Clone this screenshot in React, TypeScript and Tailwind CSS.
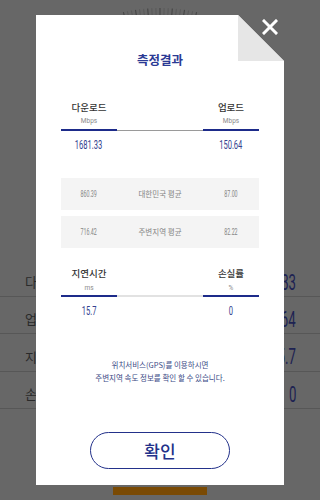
import React from "react";

const KR = { fontFamily: '"Noto Sans CJK KR", "Noto Sans", sans-serif' } as const;
const NUM = { fontFamily: 'Roboto, "Liberation Sans", sans-serif' } as const;

function Num({ children, className = "" }: { children: React.ReactNode; className?: string }) {
  return (
    <span className={"inline-block scale-x-[0.56] " + className} style={NUM}>
      {children}
    </span>
  );
}

function Ticks() {
  const ticks = [];
  const cx = 160;
  const cy = 170;
  const R = 162;
  for (let i = -9; i <= 9; i++) {
    const a = (i * 1.45 * Math.PI) / 180;
    const x1 = cx + R * Math.sin(a);
    const y1 = cy - R * Math.cos(a);
    const x2 = cx + (R - 14) * Math.sin(a);
    const y2 = cy - (R - 14) * Math.cos(a);
    ticks.push(
      <line key={i} x1={x1} y1={y1} x2={x2} y2={y2} stroke={i % 3 === 0 ? "#464646" : "#555555"} strokeWidth={i % 3 === 0 ? 1.1 : 0.8} />
    );
  }
  return (
    <svg width="320" height="30" className="absolute left-0 top-0">
      {ticks}
    </svg>
  );
}

function BgRow({ label, value, h }: { label: string; value: string; h: string }) {
  return (
    <div className={"flex items-center justify-between border-b border-[#575757] pl-[25px] pr-[24px] pt-[8px] " + h}>
      <span className="text-[13px] text-[#2a2a2a]" style={KR}>
        {label}
      </span>
      <span className="origin-right">
        <span className="inline-block origin-right scale-x-[0.6] text-[22px] text-[#1d2252]" style={NUM}>
          {value}
        </span>
      </span>
    </div>
  );
}

function BarLine({ mid }: { mid: string }) {
  return (
    <div className="flex items-center">
      <div className="h-[2px] w-[56px] bg-[#1d2b8a]" />
      <div className={"flex-1 " + mid} />
      <div className="h-[2px] w-[56px] bg-[#1d2b8a]" />
    </div>
  );
}

function AvgRow({ a, label, b, mt }: { a: string; label: string; b: string; mt: string }) {
  return (
    <div className={"flex h-[32px] items-center bg-[#f4f4f4] text-[#858585] " + mt}>
      <div className="w-[56px] text-center text-[9.5px]">
        <Num>{a}</Num>
      </div>
      <div className="flex-1 text-center text-[7.5px]" style={KR}>
        {label}
      </div>
      <div className="w-[56px] text-center text-[9.5px]">
        <Num>{b}</Num>
      </div>
    </div>
  );
}

export default function App() {
  return (
    <div className="relative h-[500px] w-[320px] overflow-hidden bg-[#676767]" style={KR}>
      <Ticks />
      {/* background page rows */}
      <div className="pt-[260px]">
        <BgRow label="다운로드" value="1681.33" h="h-[37px]" />
        <BgRow label="업로드" value="150.64" h="h-[37px]" />
        <BgRow label="지연시간" value="15.7" h="h-[38px]" />
        <BgRow label="손실률" value="0" h="h-[37px]" />
      </div>
      <div className="absolute left-[113px] top-[487px] h-[8px] w-[94px] bg-[#7a4a04]" />

      {/* modal */}
      <div className="absolute left-[36px] top-[15px] h-[470px] w-[248px]">
        <div className="flex h-full flex-col bg-white px-[25px] [clip-path:polygon(0_0,calc(100%_-_46px)_0,100%_46px,100%_100%,0_100%)]">
          <div className="mt-[38px] h-[14px] text-center text-[12.5px] font-bold leading-[14px] text-[#2b3a94]">측정결과</div>

          <div className="mt-[34px] flex h-[12px] justify-between text-[9.5px] font-medium leading-[12px] text-[#333]">
            <div className="w-[56px] text-center">다운로드</div>
            <div className="w-[56px] text-center">업로드</div>
          </div>
          <div className="mt-[4px] flex h-[8px] justify-between text-[6.5px] leading-[8px] text-[#8a8a8a]" style={NUM}>
            <div className="w-[56px] text-center">Mbps</div>
            <div className="w-[56px] text-center">Mbps</div>
          </div>
          <div className="mt-[4px]">
            <BarLine mid="h-px bg-[#9a9a9a]" />
          </div>
          <div className="mt-[5px] flex h-[14px] justify-between text-[13.5px] leading-[14px] text-[#34428f]">
            <div className="w-[56px] text-center">
              <Num>1681.33</Num>
            </div>
            <div className="w-[56px] text-center">
              <Num>150.64</Num>
            </div>
          </div>

          <AvgRow a="860.39" label="대한민국 평균" b="87.00" mt="mt-[28px]" />
          <AvgRow a="716.42" label="주변지역 평균" b="82.22" mt="mt-[6px]" />

          <div className="mt-[19px] flex h-[12px] justify-between text-[9.5px] font-medium leading-[12px] text-[#333]">
            <div className="w-[56px] text-center">지연시간</div>
            <div className="w-[56px] text-center">손실률</div>
          </div>
          <div className="mt-[5px] flex h-[8px] justify-between text-[6.5px] leading-[8px] text-[#8a8a8a]" style={NUM}>
            <div className="w-[56px] text-center">ms</div>
            <div className="w-[56px] text-center">%</div>
          </div>
          <div className="mt-[3px]">
            <BarLine mid="h-[2px] bg-[#e2e2e2]" />
          </div>
          <div className="mt-[5px] flex h-[14px] justify-between text-[13.5px] leading-[14px] text-[#34428f]">
            <div className="w-[56px] text-center">
              <Num>15.7</Num>
            </div>
            <div className="w-[56px] text-center">
              <Num>0</Num>
            </div>
          </div>

          <div className="mt-[42px] h-[26px] text-center text-[7.5px] leading-[13px] text-[#3b4a86]">
            <div>위치서비스(GPS)를 이용하시면</div>
            <div>주변지역 속도 정보를 확인 할 수 있습니다.</div>
          </div>

          <div className="mt-[48px] flex justify-center">
            <div className="flex h-[37px] w-[140px] items-center justify-center rounded-full border border-[#23318a] text-[17px] font-medium text-[#23318a]">
              확인
            </div>
          </div>
        </div>
        {/* folded corner */}
        <div className="absolute right-0 top-0 h-[46px] w-[46px] bg-[#e6e6e6] [clip-path:polygon(0_0,0_100%,100%_100%)]" />
        {/* close */}
        <svg className="absolute right-[6px] top-[4px]" width="16" height="16" viewBox="0 0 16 16">
          <path d="M2 2 L14 14 M14 2 L2 14" stroke="#ffffff" strokeWidth="3" strokeLinecap="square" />
        </svg>
      </div>
    </div>
  );
}
